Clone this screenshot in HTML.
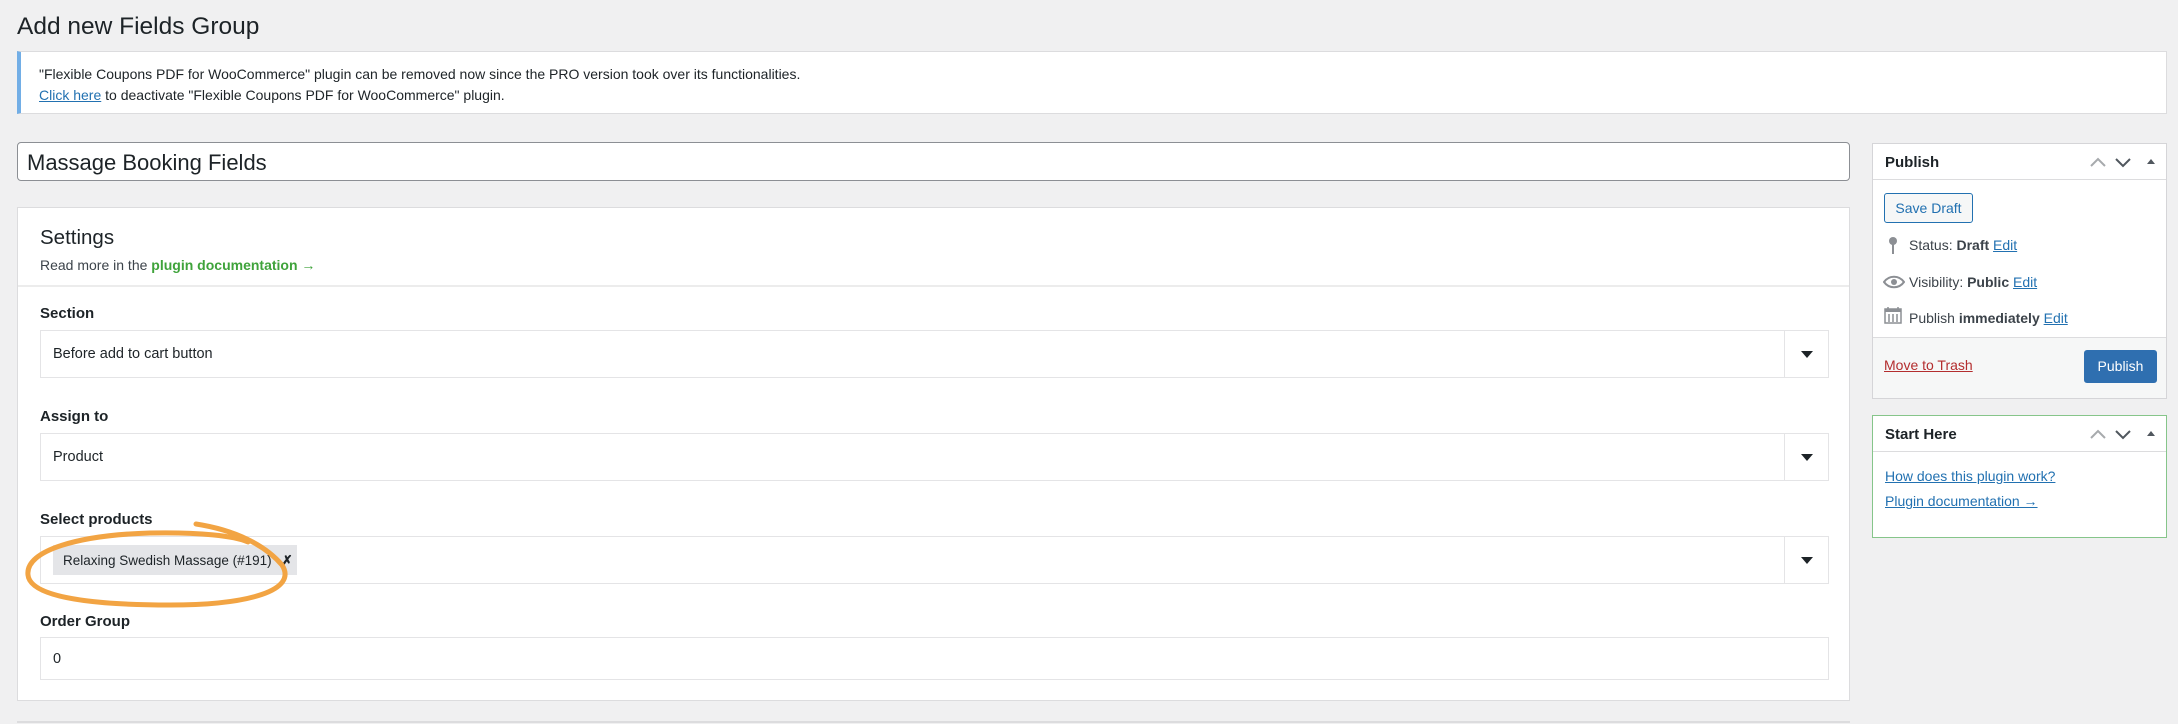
<!DOCTYPE html>
<html><head><meta charset="utf-8"><style>
*{box-sizing:border-box;margin:0;padding:0}
body{width:2178px;height:724px;background:#f0f0f1;font-family:"Liberation Sans",sans-serif;color:#1d2327;position:relative;overflow:hidden;font-size:15px}
.a{position:absolute}
a{color:#2271b1;text-decoration:underline}
.box{background:#fff;border:1px solid #dcdcde}
.sel{position:absolute;left:22px;width:1789px;background:#fff;border:1px solid #e4e4e6;font-size:14.5px}
.sel .t{position:absolute;left:12px;top:50%;transform:translateY(-50%)}
.sel .d{position:absolute;right:0;top:0;bottom:0;width:44px;border-left:1px solid #e4e4e6}
.sel .d:after{content:"";position:absolute;left:16px;top:50%;margin-top:-3px;border-left:6px solid transparent;border-right:6px solid transparent;border-top:7px solid #1d2327}
.lbl{position:absolute;left:22px;font-weight:bold;font-size:15px}
</style></head><body>
<div class="a" style="left:17px;top:13px;font-size:24.5px;color:#1d2327">Add new Fields Group</div>
<div class="a box" style="left:17px;top:51px;width:2150px;height:63px;border-left:4px solid #72aee6">
<div class="a" style="left:18px;top:14px;font-size:14px">"Flexible Coupons PDF for WooCommerce" plugin can be removed now since the PRO version took over its functionalities.</div>
<div class="a" style="left:18px;top:35px;font-size:14px"><a>Click here</a> to deactivate "Flexible Coupons PDF for WooCommerce" plugin.</div></div>
<div class="a" style="left:17px;top:142px;width:1833px;height:39px;background:#fff;border:1px solid #8c8f94;border-radius:4px"><div class="a" style="left:9px;top:7px;font-size:22px">Massage Booking Fields</div></div>
<div class="a box" style="left:17px;top:207px;width:1833px;height:494px">
<div class="a" style="left:22px;top:18px;font-size:20.5px">Settings</div>
<div class="a" style="left:22px;top:49px;font-size:14px;color:#3c434a">Read more in the <b style="color:#3fa33b">plugin documentation →</b></div>
<div class="a" style="left:0;top:77px;width:100%;border-top:2px solid #ececec"></div>
<div class="lbl" style="top:97px">Section</div>
<div class="sel" style="top:122px;height:48px"><span class="t">Before add to cart button</span><span class="d"></span></div>
<div class="lbl" style="top:200px">Assign to</div>
<div class="sel" style="top:225px;height:48px"><span class="t">Product</span><span class="d"></span></div>
<div class="lbl" style="top:303px">Select products</div>
<div class="sel" style="top:328px;height:48px"><span class="a" style="left:12px;top:8px;width:244px;height:30px;background:#e4e5e8;font-size:13.5px;padding:8px 0 0 10px;white-space:nowrap">Relaxing Swedish Massage (#191) <b style="margin-left:6px">✗</b></span><span class="d"></span></div>
<div class="lbl" style="top:405px">Order Group</div>
<div class="sel" style="top:429px;height:43px"><span class="t">0</span></div>
</div>
<div class="a" style="left:17px;top:721px;width:1833px;border-top:2px solid #dcdcde"></div>
<svg class="a" style="left:0;top:0" width="400" height="724"><path d="M196 524 C235 530 265 545 282 565 C298 590 250 605 170 605 C80 605 30 595 28 575 C25 550 80 535 150 533 C200 532 235 536 248 542" fill="none" stroke="#f2a443" stroke-width="5" stroke-linecap="round"/></svg>
<div class="a box" style="left:1872px;top:143px;width:295px;height:256px;border-color:#d5d5d8">
<div class="a" style="left:12px;top:10px;font-weight:bold;font-size:15px">Publish</div>
<svg class="a" style="left:216px;top:10px" width="80" height="16"><path d="M2 12 L9 5 L16 12" fill="none" stroke="#a7aaad" stroke-width="2"/><path d="M27 5 L34 12 L41 5" fill="none" stroke="#50575e" stroke-width="2"/><path d="M58 10 L62 5 L66 10Z" fill="#50575e"/></svg>
<div class="a" style="left:0;top:35px;width:100%;border-top:1px solid #dcdcde"></div>
<div class="a" style="left:11px;top:49px;width:89px;height:30px;border:1px solid #2271b1;border-radius:3px;background:#f6f7f7;color:#2271b1;font-size:14px;text-align:center;line-height:28px">Save Draft</div>
<svg class="a" style="left:14px;top:92px" width="12" height="20"><circle cx="6" cy="5" r="4" fill="#8c8f94"/><rect x="5" y="8" width="2" height="10" fill="#8c8f94"/></svg>
<div class="a" style="left:36px;top:93px;font-size:14px;color:#3c434a">Status: <b>Draft</b> <a>Edit</a></div>
<svg class="a" style="left:10px;top:131px" width="22" height="14"><path d="M1 7 C6 0 16 0 21 7 C16 14 6 14 1 7Z" fill="none" stroke="#8c8f94" stroke-width="2"/><circle cx="11" cy="7" r="3" fill="#8c8f94"/></svg>
<div class="a" style="left:36px;top:130px;font-size:14px;color:#3c434a">Visibility: <b>Public</b> <a>Edit</a></div>
<svg class="a" style="left:11px;top:162px" width="18" height="18"><rect x="1" y="3" width="16" height="14" fill="none" stroke="#8c8f94" stroke-width="1.5"/><rect x="1" y="3" width="16" height="3" fill="#8c8f94"/><path d="M5 8v8M9 8v8M13 8v8M4 1v4M14 1v4" stroke="#8c8f94" stroke-width="1.5"/></svg>
<div class="a" style="left:36px;top:166px;font-size:14px;color:#3c434a">Publish <b>immediately</b> <a>Edit</a></div>
<div class="a" style="left:0;top:193px;width:100%;height:61px;background:#f6f7f7;border-top:1px solid #dcdcde"></div>
<div class="a" style="left:11px;top:213px;font-size:14px"><a style="color:#b32d2e">Move to Trash</a></div>
<div class="a" style="left:211px;top:206px;width:73px;height:33px;background:#2f6fb0;border-radius:3px;color:#fff;font-size:14px;text-align:center;line-height:33px">Publish</div>
</div>
<div class="a" style="left:1872px;top:415px;width:295px;height:123px;background:#fff;border:1px solid #86c58a">
<div class="a" style="left:12px;top:10px;font-weight:bold;font-size:15px">Start Here</div>
<svg class="a" style="left:216px;top:10px" width="80" height="16"><path d="M2 12 L9 5 L16 12" fill="none" stroke="#a7aaad" stroke-width="2"/><path d="M27 5 L34 12 L41 5" fill="none" stroke="#50575e" stroke-width="2"/><path d="M58 10 L62 5 L66 10Z" fill="#50575e"/></svg>
<div class="a" style="left:0;top:35px;width:100%;border-top:1px solid #dcdcde"></div>
<div class="a" style="left:12px;top:52px;font-size:14px"><a>How does this plugin work?</a></div>
<div class="a" style="left:12px;top:77px;font-size:14px"><a>Plugin documentation →</a></div>
</div>
</body></html>
